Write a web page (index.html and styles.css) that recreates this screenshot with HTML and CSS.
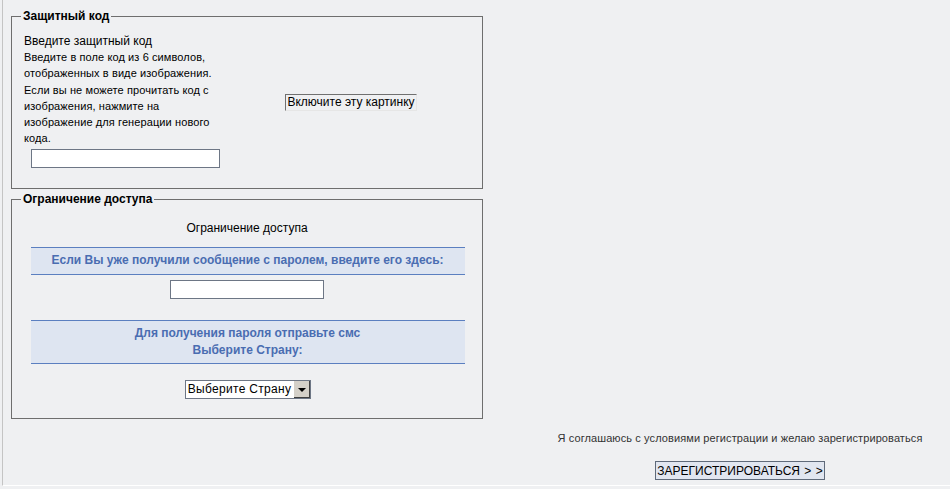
FILE: index.html
```html
<!DOCTYPE html>
<html lang="ru">
<head>
    <meta charset="UTF-8">
    <title>Регистрация</title>
    <link rel="stylesheet" href="styles.css">
</head>
<body>

    <div class="page">

        <!-- Защитный код -->
        <fieldset class="box">
            <legend>Защитный код</legend>
            <div class="captcha">
                <div class="captcha-text">
                    <div class="title">Введите защитный код</div>
                    <div class="hint">Введите в поле код из 6 символов, отображенных в виде изображения. Если вы не можете прочитать код с изображения, нажмите на изображение для генерации нового кода.</div>
                    <input type="text" class="code-input">
                </div>
                <div class="captcha-img">
                    <span class="alt-img">Включите эту картинку</span>
                </div>
            </div>
        </fieldset>

        <!-- Ограничение доступа -->
        <fieldset class="box box-access">
            <legend>Ограничение доступа</legend>
            <div class="access">
                <div class="access-title">Ограничение доступа</div>
                <div class="band">Если Вы уже получили сообщение с паролем, введите его здесь:</div>
                <input type="text" class="pass-input">
                <div class="band band-tall">Для получения пароля отправьте смс<br>Выберите Страну:</div>
                <div class="select">
                    <span class="select-value">Выберите Страну</span>
                    <span class="select-btn"><span class="arrow"></span></span>
                </div>
            </div>
        </fieldset>

        <div class="footer">
            <div class="agree">Я соглашаюсь с условиями регистрации и желаю зарегистрироваться</div>
            <button class="submit">ЗАРЕГИСТРИРОВАТЬСЯ &gt; &gt;</button>
        </div>

    </div>

</body>
</html>
```

FILE: styles.css
```css
/* Базовые стили */
body {
    margin: 0;
    padding: 0;
    background-color: #eff0f2;
    font-family: "Liberation Sans", Arial, sans-serif;
    color: #000;
    overflow: hidden;
}

.page {
    margin-left: 2px;
    height: 486px;
    border-left: 1px solid #c4c4c4;
    border-bottom: 1px solid #ffffff;
    box-shadow: 0 1px 0 #c4c4c4;
    padding-left: 8px;
    padding-top: 9px;
    box-sizing: border-box;
}

/* Рамки */
.box {
    width: 472px;
    margin: 0;
    padding: 0;
    border: 1px solid #6e6e6e;
    box-sizing: border-box;
    min-width: 0;
}

.box legend {
    font-size: 12px;
    font-weight: bold;
    padding: 0 2px;
    margin-left: 9px;
}

.box-access {
    margin-top: 3px;
    height: 227px;
}

/* Защитный код */
.captcha {
    display: flex;
    height: 165px;
}

.captcha-text {
    width: 196px;
    padding-left: 12px;
    padding-top: 10px;
}

.title {
    font-size: 12px;
    line-height: 16px;
}

.hint {
    font-size: 11px;
    line-height: 16.3px;
    letter-spacing: 0.1px;
    margin-top: 0;
}

.code-input {
    display: block;
    width: 189px;
    height: 19px;
    box-sizing: border-box;
    margin: 2px 0 0 7px;
    border: 1px solid #6d7685;
    background: #fff;
}

.captcha-img {
    flex: 1;
    display: flex;
    align-items: center;
    justify-content: center;
    padding-bottom: 6px;
}

.alt-img {
    font-size: 12px;
    line-height: 15px;
    padding: 0 1px;
    border-left: 1px solid #707070;
    border-top: 1px solid #707070;
    border-right: 1px solid #e6e6e6;
    border-bottom: 1px solid #e6e6e6;
}

/* Ограничение доступа */
.access {
    display: flex;
    flex-direction: column;
    align-items: center;
    padding-top: 14px;
}

.access-title {
    font-size: 12px;
    line-height: 16px;
}

.band {
    width: 434px;
    margin-left: 1px;
    box-sizing: border-box;
    background-color: #dee5f1;
    border-top: 1px solid #5b7fc0;
    border-bottom: 1px solid #5b7fc0;
    color: #4a6db1;
    font-size: 12px;
    font-weight: bold;
    text-align: center;
    line-height: 17px;
    padding: 4px 0 5px;
    margin-top: 11px;
}

.band-tall {
    margin-top: 21px;
    padding: 4px 0 4px;
}

.pass-input {
    width: 154px;
    height: 19px;
    box-sizing: border-box;
    margin-top: 5px;
    border: 1px solid #6d7685;
    background: #fff;
}

.select {
    display: flex;
    margin-top: 16px;
    margin-left: 2px;
    height: 19px;
    box-sizing: border-box;
    border: 1px solid #6d7685;
    background: #fff;
}

.select-value {
    font-size: 12px;
    line-height: 17px;
    padding: 0 2px 0 2px;
    letter-spacing: 0.3px;
}

.select-btn {
    width: 16px;
    background-color: #d4d0c8;
    border-left: 1px solid #fff;
    box-shadow: inset -1px -1px 0 #404040;
    display: flex;
    align-items: center;
    justify-content: center;
}

.arrow {
    width: 0;
    height: 0;
    border-left: 4px solid transparent;
    border-right: 4px solid transparent;
    border-top: 4px solid #000;
}

/* Подвал */
.footer {
    margin-left: 518px;
    width: 422px;
    text-align: center;
    padding-top: 12px;
}

.agree {
    font-size: 11px;
    color: #333;
    line-height: 14px;
    letter-spacing: 0.1px;
}

.submit {
    margin-top: 16px;
    height: 19px;
    padding: 0 1px;
    font-family: "Liberation Sans", Arial, sans-serif;
    font-size: 12px;
    letter-spacing: 0;
    word-spacing: 1px;
    background-color: #e1e6f0;
    border: 1px solid #5f6a7a;
    color: #000;
}
```
